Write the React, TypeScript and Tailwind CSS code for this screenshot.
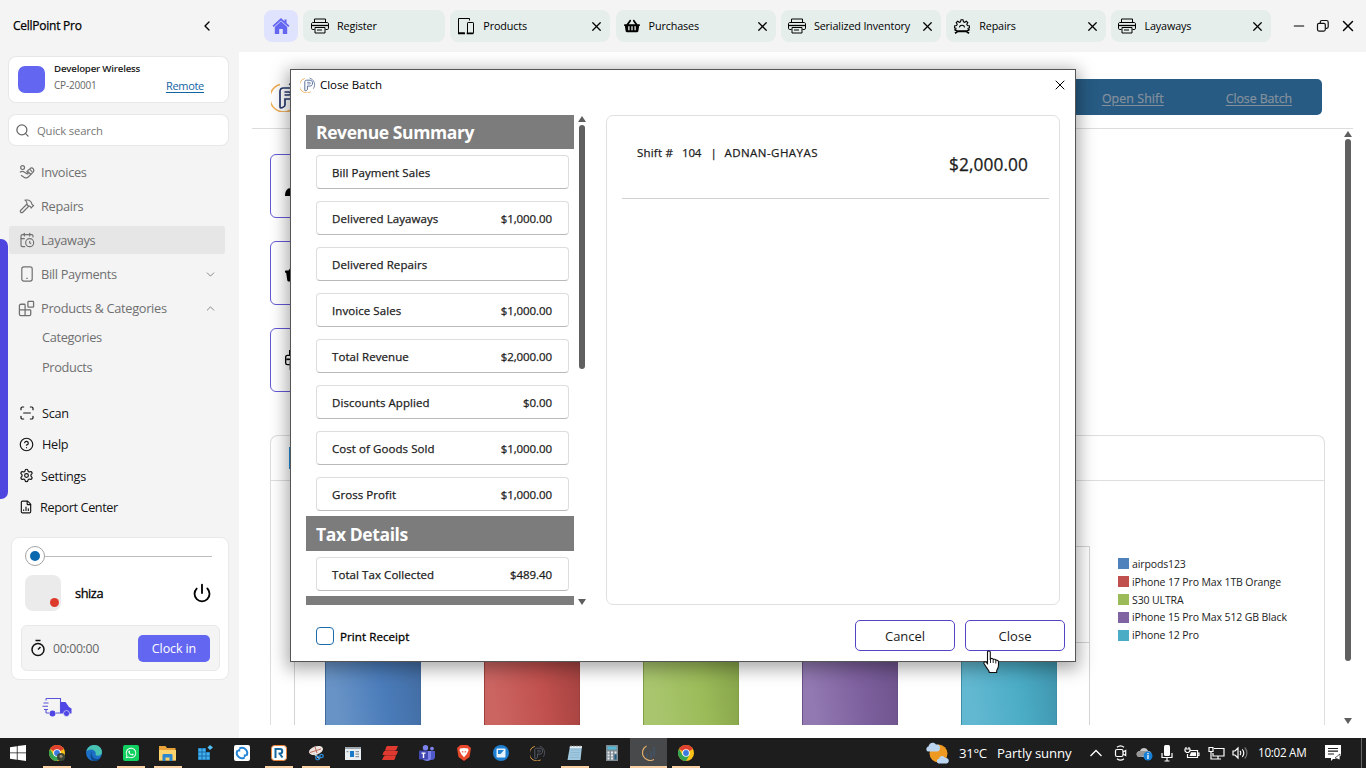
import React from "react";
import {
  CalendarClock,
  Blocks,
  ScanLine,
  Settings,
  FileChartColumn,
  HelpCircle,
  Hammer,
  Power,
  Search,
  ChevronLeft,
  ChevronDown,
  ChevronUp,
  X,
  Minus,
} from "lucide-react";
import { FaShoppingBasket, FaWhatsapp } from "react-icons/fa";

function Printer({ className = "" }: { className?: string }) {
  return (
    <svg viewBox="0 0 18 16" fill="none" stroke="currentColor" strokeWidth="1" className={className}>
      <path d="M3.5 4.500V1h11v3.500M3.500 11.500H1.800c-.8 0-1.300-.4-1.300-1.200V6c0-.9.500-1.500 1.300-1.500h14.400c.8 0 1.300.6 1.300 1.500v4.300c0 .8-.5 1.200-1.300 1.200h-1.700" />
      <path d="M1 7.500h16" strokeWidth="1.300" />
      <path d="M4 9.500h10V15H4zM6 12h5" />
    </svg>
  );
}

function Devices() {
  return (
    <svg viewBox="0 0 18 18" fill="none" stroke="currentColor" strokeWidth="1" className="h-[18px] w-[18px]">
      <path d="M12.500 3.500V1.500h-11v14.500h6" />
      <path d="M1 16.300h7M9.700 16.300h6.600" strokeWidth="1.800" />
      <rect x="10.500" y="5.500" width="6" height="11" rx="0.600" />
    </svg>
  );
}

function GearTools() {
  return (
    <svg viewBox="0 0 18 16" fill="none" stroke="currentColor" strokeWidth="1.100" className="h-4 w-[18px]">
      <path d="M3.500 10.500 1.500 9.800l.2-2 1.900-.3.600-1.300L3.200 4.600l1.500-1.300 1.600 1 1.200-.5.500-2h2l.5 2 1.200.500 1.600-1 1.500 1.300-1 1.600.6 1.300 1.900.300.2 2-2 .7" />
      <path d="M6.300 9.300a2.800 2.800 0 0 1 5.400 0" />
      <path d="M1.500 11.300 4 13.200h10l2.500-1.900M2 15.300l2.500-1.800h9l2.500 1.800" strokeWidth="1.700" />
    </svg>
  );
}

function InvoiceIcon() {
  return (
    <svg viewBox="0 0 16 16" fill="none" stroke="currentColor" strokeWidth="1.200" strokeLinecap="round" strokeLinejoin="round" className="h-4 w-4">
      <circle cx="3.600" cy="3.600" r="1.900" />
      <path d="M1.300 8c1.600-1 3.200-.6 4.700.6l1.800 1.200c.7.500 1.700-.3 1.100-1.100L7.800 7.600l3.200-3c1-1 2.400-.9 3.100 0 1 1.300.8 2.700-.2 3.800L9.300 13c-1.300 1.300-3 1-4.300.2L2.400 11.600" />
      <path d="M9 7.800 11.500 10M11 5.600l2 2" />
    </svg>
  );
}

function PhoneIcon() {
  return (
    <svg viewBox="0 0 12 16" fill="none" stroke="currentColor" strokeWidth="1.200" className="h-4 w-3">
      <rect x="0.800" y="0.900" width="10.400" height="14.200" rx="2" />
      <path d="M5.300 12.300h1.400" />
    </svg>
  );
}

function HomeIcon() {
  return (
    <svg viewBox="0 0 18 16" className="h-4 w-[18px]">
      <path d="M9 0 .5 7.800l1.200 1.300L9 2.500l7.300 6.600 1.200-1.300L14.500 5V1.500h-2V3.200z" fill="#6366f1" />
      <path d="M9 3.300 2.800 8.900V16h4.400v-5h3.600v5h4.400V8.900z" fill="#6366f1" />
    </svg>
  );
}

function Logo({ className = "", stroke = "#25396f" }: { className?: string; stroke?: string }) {
  return (
    <svg viewBox="0 0 30 30" fill="none" className={className}>
      <path d="M9 2.500A14 14 0 1 0 20 28" stroke="#efad50" strokeWidth="1.600" />
      <path d="M18 2a13 13 0 0 1 7 20" stroke={stroke} strokeWidth="1.400" />
      <path d="M9 25V9.500C9 7 10 6 12.500 6H19c6 0 6 11 0 11h-5v6c0 2-5 4-5 2Z" stroke={stroke} strokeWidth="1.700" />
      <path d="M13.500 10H18c2 0 2 3 0 3h-4.500" stroke={stroke} strokeWidth="1.400" />
    </svg>
  );
}

const navItems = [
  { label: "Invoices", icon: <InvoiceIcon /> },
  { label: "Repairs", icon: <Hammer size={16} strokeWidth={1.700} /> },
  { label: "Layaways", icon: <CalendarClock size={16} strokeWidth={1.700} />, active: true },
  { label: "Bill Payments", icon: <PhoneIcon />, chevron: "down" },
  { label: "Products & Categories", icon: <Blocks size={17} strokeWidth={1.800} />, chevron: "up" },
];

function Sidebar() {
  return (
    <aside className="relative flex h-[738px] w-[239px] shrink-0 flex-col bg-[#f4f4f5]">
      <div className="absolute top-[239px] left-0 h-[260px] w-2 rounded-r-[7px] bg-[#4f46e0]" />
      <div className="flex h-[52px] items-center justify-between pr-6 pl-[13px]">
        <span className="text-[12px] tracking-[-0.250px] text-black [-webkit-text-stroke:0.250px]">CellPoint Pro</span>
        <ChevronLeft size={16} strokeWidth={2} className="text-black" />
      </div>
      <div className="mt-[5px] ml-[9px] flex h-[45px] w-[219px] items-center rounded-[7px] bg-white pl-[9px] ring-1 ring-[#e8e8ea]">
        <div className="size-[27px] rounded-[7px] bg-[#6366f1]" />
        <div className="ml-[9px] flex h-full w-[150px] flex-col pt-1">
          <span className="text-[9.700px] leading-4 font-semibold tracking-[-0.200px] text-[#222]">Developer Wireless</span>
          <div className="flex items-center justify-between">
            <span className="text-[10px] leading-[17px] tracking-[-0.200px] text-[#666]">CP-20001</span>
            <span className="text-[11px] leading-[17px] tracking-[-0.300px] text-[#1264a3] underline underline-offset-2">Remote</span>
          </div>
        </div>
      </div>
      <div className="mt-[13px] ml-[9px] flex h-[30px] w-[219px] items-center rounded-[7px] bg-white pl-[6px] ring-1 ring-[#e8e8ea]">
        <Search size={15} strokeWidth={2} className="text-[#666]" />
        <span className="ml-[7px] pt-0.5 text-[11.300px] tracking-[-0.170px] text-[#777]">Quick search</span>
      </div>
      <nav className="mt-[13px] flex flex-col gap-1.5 pl-[9px] text-[#707070]">
        {navItems.map((n) => (
          <div
            key={n.label}
            className={
              n.active
                ? "flex h-7 w-[216px] items-center rounded-[3px] bg-[#e6e6e6] pl-[9px]"
                : "flex h-7 w-[216px] items-center pl-[9px]"
            }
          >
            <span className="flex w-[17px] justify-center">{n.icon}</span>
            <span className="ml-1.5 flex-1 pt-0.5 text-[12.800px] tracking-[-0.320px] whitespace-nowrap">{n.label}</span>
            {n.chevron === "down" && <ChevronDown size={13} strokeWidth={1.500} className="mr-2" />}
            {n.chevron === "up" && <ChevronUp size={13} strokeWidth={1.500} className="mr-2" />}
          </div>
        ))}
      </nav>
      <div className="flex flex-col pl-[42px] text-[12.800px] tracking-[-0.350px] text-[#707070]">
        <span className="h-[30px] leading-[30px]">Categories</span>
        <span className="h-[30px] leading-[30px]">Products</span>
      </div>
      <div className="mt-[15px] flex flex-col pl-[19px] text-[12.700px] tracking-[-0.450px] text-[#151515]">
        <div className="flex h-[31.500px] items-center gap-[7px]">
          <ScanLine size={16} strokeWidth={1.800} />
          <span className="pt-px tracking-[-0.300px]">Scan</span>
        </div>
        <div className="flex h-[31.500px] items-center gap-2">
          <HelpCircle size={15} strokeWidth={1.900} />
          <span className="pt-px tracking-[-0.300px]">Help</span>
        </div>
        <div className="flex h-[31.500px] items-center gap-[7px]">
          <Settings size={15} strokeWidth={1.900} />
          <span className="pt-px tracking-[-0.250px]">Settings</span>
        </div>
        <div className="flex h-[31.500px] items-center gap-[7px]">
          <FileChartColumn size={14} strokeWidth={2} />
          <span className="tracking-[-0.400px]">Report Center</span>
        </div>
      </div>
      <div className="mt-[14px] ml-[11px] flex h-[143px] w-[218px] flex-col rounded-lg border border-[#e9e9eb] bg-white pl-[9px]">
        <div className="mt-2 ml-1 flex items-center">
          <div className="flex size-[20px] items-center justify-center rounded-full border border-[#a3a3a3]">
            <div className="size-[10px] rounded-full bg-[#0a68ae]" />
          </div>
          <div className="h-px w-[167px] bg-[#bdbdbd]" />
        </div>
        <div className="mt-[9px] ml-1 flex h-9 items-center">
          <div className="flex size-9 items-end justify-end rounded-lg bg-[#ebebeb] pr-[2px] pb-1">
            <div className="size-[9px] rounded-full bg-[#dd3a2c]" />
          </div>
          <span className="ml-[14px] flex-1 pt-0.5 text-[12.800px] tracking-[-0.450px] text-black [-webkit-text-stroke:0.300px]">shiza</span>
          <Power size={20} strokeWidth={2.200} className="mr-[16px] text-black" />
        </div>
        <div className="mt-[14px] flex h-[46px] w-[199px] items-center rounded-md border border-[#e8e8e8] bg-[#f4f4f5] pl-2">
          <svg viewBox="0 0 16 18" fill="none" stroke="#111" strokeWidth="1.500" className="h-[18px] w-4">
            <circle cx="8" cy="10.500" r="6" />
            <path d="M5.500 1.500h5M8 10.500l2.500-2.500" />
          </svg>
          <span className="ml-[7px] w-[85px] pt-0.5 text-[12.300px] tracking-[-0.350px] text-[#666]">00:00:00</span>
          <div className="flex h-[27px] w-[72px] items-center justify-center rounded-[5px] bg-[#6366f1] pt-0.5 text-[12.500px] tracking-[-0.100px] text-white">
            Clock in
          </div>
        </div>
      </div>
      <svg viewBox="0 0 30 20" fill="none" className="mt-[17px] ml-[42px] h-5 w-[30px]">
        <path d="M4 1.500h14.500V16H14M4 16h3M4 1.500v2M4 13v3" stroke="#5a54d8" strokeWidth="1.100" />
        <path d="M1.500 6h5M.5 9.300h5.500M2 12.500h4" stroke="#5a54d8" strokeWidth="1.100" />
        <path d="M18.500 5h5l3.500 5 2.500 1.500v5H18.500z" fill="#4f46e5" />
        <circle cx="10.500" cy="16.500" r="3" fill="#4f46e5" />
        <circle cx="24.500" cy="16.500" r="3" fill="#4f46e5" stroke="#f4f4f5" strokeWidth="0.600" />
      </svg>
    </aside>
  );
}

const tabs = [
  { label: "Register", icon: <Printer className="h-4 w-[18px]" />, closable: false },
  { label: "Products", icon: <Devices />, closable: true },
  { label: "Purchases", icon: <FaShoppingBasket size={16} />, closable: true },
  { label: "Serialized Inventory", icon: <Printer className="h-4 w-[18px]" />, closable: true },
  { label: "Repairs", icon: <GearTools />, closable: true },
  { label: "Layaways", icon: <Printer className="h-4 w-[18px]" />, closable: true },
];

function TabBar() {
  return (
    <header className="flex h-[52px] items-center bg-[#f4f4f4] pl-[25px] text-black">
      <div className="flex h-8 w-[34px] items-center justify-center rounded-lg bg-[#e0e3fd]">
        <HomeIcon />
      </div>
      <div className="ml-[5px] flex gap-[5.300px]">
        {tabs.map((t) => (
          <div
            key={t.label}
            className={
              t.closable
                ? "flex h-8 w-[160px] items-center rounded-lg bg-[#e6eeec] pr-1.5 pl-[7px]"
                : "flex h-8 w-[142px] items-center rounded-lg bg-[#e6eeec] pr-1.5 pl-[8px]"
            }
          >
            <span className="flex w-[18px] justify-center">{t.icon}</span>
            <span className="ml-2 flex-1 pt-px text-[10.800px] tracking-[-0.140px] whitespace-nowrap">{t.label}</span>
            {t.closable && <X size={15} strokeWidth={2} />}
          </div>
        ))}
      </div>
      <div className="ml-[20px] flex items-center gap-[9px]">
        <Minus size={16} strokeWidth={1.800} />
        <svg viewBox="0 0 14 14" fill="none" stroke="#111" strokeWidth="1.200" className="size-[14px]">
          <rect x="1.500" y="4.300" width="7.800" height="7.800" rx="1.500" />
          <path d="M4.300 4V3c0-.9.600-1.500 1.500-1.500h4.700c1 0 1.700.7 1.700 1.700v4.600c0 .9-.6 1.500-1.500 1.500H9.500" />
        </svg>
        <X size={18} strokeWidth={1.900} />
      </div>
    </header>
  );
}

const legend = [
  { name: "airpods123", swatch: "bg-[#4f81bd]" },
  { name: "iPhone 17 Pro Max 1TB Orange", swatch: "bg-[#c0504d]" },
  { name: "S30 ULTRA", swatch: "bg-[#9bbb59]" },
  { name: "iPhone 15 Pro Max 512 GB Black", swatch: "bg-[#8064a2]" },
  { name: "iPhone 12 Pro", swatch: "bg-[#4bacc6]" },
];

const bars = [
  { x: 31, from: "#6893c6", mid: "#4a7cba", to: "#426a9e" },
  { x: 190, from: "#cb6562", mid: "#c0504d", to: "#9f403e" },
  { x: 349, from: "#a9c66e", mid: "#9bbb59", to: "#829f47" },
  { x: 508, from: "#9279b1", mid: "#7d609e", to: "#6a5188" },
  { x: 667, from: "#62b8d0", mid: "#4bacc6", to: "#3d90a7" },
];

function Tile({ children }: { children: React.ReactNode }) {
  return (
    <div className="flex h-16 w-[240px] items-center rounded-md border border-[#6259d6] bg-white pl-[14px] text-black">
      {children}
    </div>
  );
}

function Dashboard() {
  return (
    <div className="flex h-[686px] w-full overflow-hidden bg-white">
      <div className="flex w-[1101px] flex-col">
        <div className="-mr-[13px] ml-[13px] flex h-[77px] items-start justify-between border-b border-[#dcdcdc] pl-[31px]">
          <Logo className="mt-[30px] -ml-[12px] size-[30px]" />
          <div className="mt-[27px] mr-[31px] flex h-9 w-[500px] items-center justify-end rounded-[5px] bg-[#275b83] pt-1 pr-[30px] text-[12.400px] text-[#84909c] [-webkit-text-stroke:0.250px]">
            <span className="tracking-[0.080px] underline underline-offset-2">Open Shift</span>
            <span className="ml-[62px] tracking-[-0.100px] underline underline-offset-2">Close Batch</span>
          </div>
        </div>
        <div className="mt-[25px] ml-[31px] flex flex-col gap-[23px]">
          <Tile>
            <svg viewBox="0 0 24 24" className="size-6">
              <circle cx="12" cy="7" r="5" />
              <path d="M0 22c0-5 2-8 6-8h12c4 0 6 3 6 8z" />
            </svg>
          </Tile>
          <Tile>
            <FaShoppingBasket size={22} />
          </Tile>
          <Tile>
            <Printer className="h-[22px] w-6" />
          </Tile>
        </div>
        <div className="mt-[43px] ml-[31px] flex h-[290px] w-[1055px] flex-col rounded-t-lg border border-b-0 border-[#dedede]">
          <div className="flex h-[45px] shrink-0 items-center border-b border-[#dedede] pl-[18px]">
            <div className="h-[22px] w-10 bg-[#1f8ee0]" />
          </div>
          <div className="flex">
            <svg width="796" height="244" viewBox="0 0 796 244" className="ml-[23px] shrink-0">
              <defs>
                {bars.map((b) => (
                  <linearGradient key={b.x} id={`bar${b.x}`} x1="0" y1="0.200" x2="1" y2="0">
                    <stop offset="0" stopColor={b.from} />
                    <stop offset="0.500" stopColor={b.mid} />
                    <stop offset="1" stopColor={b.to} />
                  </linearGradient>
                ))}
              </defs>
              <path d="M.5 244V65.500h795V244M.5 161.500h795" fill="none" stroke="#d4d4d4" />
              {bars.map((b) => (
                <rect key={b.x} x={b.x + 0.500} y="130" width="95" height="120" fill={`url(#bar${b.x})`} stroke={b.to} />
              ))}
            </svg>
            <div className="mt-[74px] ml-[28px] flex flex-col">
              {legend.map((l) => (
                <div key={l.name} className="flex h-[17.800px] items-center">
                  <div className={`size-[11px] ${l.swatch}`} />
                  <span className="ml-[3px] pt-0.5 text-[10.500px] tracking-[-0.120px] whitespace-nowrap text-[#222]">{l.name}</span>
                </div>
              ))}
            </div>
          </div>
        </div>
        <div className="h-[13px] shrink-0 bg-white" />
      </div>
      <div className="flex w-[15px] flex-col items-center pt-[79px] pb-[14px]">
        <svg viewBox="0 0 8 6" className="h-[6px] w-2 shrink-0 fill-[#5e5e5e]">
          <path d="M4 0 8 6H0z" />
        </svg>
        <div className="mt-[2px] h-[522px] w-[6px] rounded-full bg-[#606060]" />
        <div className="flex-1" />
        <svg viewBox="0 0 8 6" className="h-[6px] w-2 shrink-0 fill-[#5e5e5e]">
          <path d="M0 0h8L4 6z" />
        </svg>
      </div>
    </div>
  );
}

function Section({ title, tall = false }: { title: string; tall?: boolean }) {
  return (
    <div
      className={
        tall
          ? "h-[35px] w-[268px] shrink-0 bg-[#7c7c7c] pl-[10px] text-[17.500px] leading-[37px] font-bold tracking-[-0.400px] text-white"
          : "h-[34px] w-[268px] shrink-0 bg-[#7c7c7c] pl-[10px] text-[17.500px] leading-[35px] font-bold tracking-[-0.400px] text-white"
      }
    >
      {title}
    </div>
  );
}

function Row({ label, value }: { label: string; value?: string }) {
  return (
    <div className="ml-[10px] flex h-[34px] w-[253px] shrink-0 items-center justify-between rounded-[4px] border border-[#dddddd] border-b-[#b9b9b9] pt-px pr-4 pl-[15px] text-[11.500px] text-[#1c1c1c] [-webkit-text-stroke:0.250px]">
      <span className="tracking-[0.070px]">{label}</span>
      <span className="tracking-[-0.080px]">{value}</span>
    </div>
  );
}

const revenue = [
  { label: "Bill Payment Sales", value: "" },
  { label: "Delivered Layaways", value: "$1,000.00" },
  { label: "Delivered Repairs", value: "" },
  { label: "Invoice Sales", value: "$1,000.00" },
  { label: "Total Revenue", value: "$2,000.00" },
  { label: "Discounts Applied", value: "$0.00" },
  { label: "Cost of Goods Sold", value: "$1,000.00" },
  { label: "Gross Profit", value: "$1,000.00" },
];

function CloseBatchDialog() {
  return (
    <div className="absolute top-[69px] left-[290px] flex h-[593px] w-[786px] flex-col border border-[#555] bg-white shadow-[0_4px_16px_3px_rgba(0,0,0,0.34)]">
      <div className="flex h-[29px] items-center pr-[7px] pl-[9px]">
        <Logo className="size-4" stroke="#4c658f" />
        <span className="ml-1 flex-1 text-[11.500px] tracking-[-0.050px] text-black">Close Batch</span>
        <X size={16} strokeWidth={1.500} className="text-black" />
      </div>
      <div className="mt-4 flex h-[490px] pl-[15px]">
        <div className="flex w-[268px] flex-col overflow-hidden">
          <Section title="Revenue Summary" />
          <div className="mt-1.5 mb-[5px] flex flex-col gap-3">
            {revenue.map((r) => (
              <Row key={r.label} label={r.label} value={r.value} />
            ))}
          </div>
          <Section title="Tax Details" tall />
          <div className="mt-1.5 mb-[5px]">
            <Row label="Total Tax Collected" value="$489.40" />
          </div>
          <Section title="" />
        </div>
        <div className="ml-1 flex w-2 flex-col items-center">
          <svg viewBox="0 0 8 6" className="mt-px h-[6px] w-2 shrink-0 fill-[#5e5e5e]">
            <path d="M4 0 8 6H0z" />
          </svg>
          <div className="mt-[3px] h-[244px] w-[6px] rounded-full bg-[#606060]" />
          <div className="flex-1" />
          <svg viewBox="0 0 8 6" className="h-[6px] w-2 shrink-0 fill-[#5e5e5e]">
            <path d="M0 0h8L4 6z" />
          </svg>
        </div>
        <div className="ml-5 h-full w-[454px] rounded-[7px] border border-[#e0e0e0] pr-[10px] pl-[15px]">
          <div className="flex h-[83px] items-start justify-between border-b border-[#d0d0d0] pr-[21px] pl-[15px] text-[#1c1c1c] [-webkit-text-stroke:0.250px]">
            <div className="mt-[29px] flex text-[11.500px] leading-4">
              <span className="w-[45px] tracking-[0.200px]">Shift #</span>
              <span className="w-[28.500px] tracking-[-0.200px]">104</span>
              <span className="w-[14px]">|</span>
              <span className="tracking-[0.450px]">ADNAN-GHAYAS</span>
            </div>
            <span className="mt-[37px] text-[17.300px] leading-6 tracking-[0.080px]">$2,000.00</span>
          </div>
        </div>
      </div>
      <div className="flex flex-1 items-center pt-[5px] pr-[10px] pl-[25px]">
        <div className="size-[18px] rounded-[4px] border-[1.500px] border-[#1d6baa]" />
        <span className="ml-1.5 flex-1 pt-0.5 text-[11.600px] tracking-[0.050px] text-black [-webkit-text-stroke:0.300px]">Print Receipt</span>
        <button className="h-[31px] w-[100px] rounded-[5px] border border-[#5145c4] pt-0.5 text-[13px] tracking-[-0.050px] text-[#1c1c1c]">
          Cancel
        </button>
        <button className="ml-[10px] h-[31px] w-[100px] rounded-[5px] border border-[#5145c4] pt-0.5 text-[13px] tracking-[0.050px] text-[#1c1c1c]">
          Close
        </button>
      </div>
    </div>
  );
}

function Chrome({ profile = false }: { profile?: boolean }) {
  return (
    <svg viewBox="0 0 16 16" className="size-4">
      <circle cx="8" cy="8" r="8" fill="#fbc116" />
      <path d="M8 8 1.070 4A8 8 0 0 1 14.930 4z" fill="#df4130" />
      <path d="M1.070 4A8 8 0 0 0 8 16l3.500-6L8 8 4.500 10z" fill="#35a352" />
      <circle cx="8" cy="8" r="3.800" fill="#fff" />
      <circle cx="8" cy="8" r="2.900" fill="#3a79e0" />
      {profile && <circle cx="12" cy="12" r="4" fill="#3c4636" />}
      {profile && <circle cx="12" cy="11.300" r="1.500" fill="#a48b70" />}
    </svg>
  );
}

const apps = [
  { key: "browser", open: true, icon: <Chrome profile /> },
  {
    key: "edge",
    icon: (
      <svg viewBox="0 0 16 16" className="size-4">
        <circle cx="8" cy="8" r="8" fill="#1c6fc4" />
        <path d="M.3 6.500C1.500 2 5 0 8.500 0 13 0 16 3.500 16 7c0 2.500-2 3.800-4 3.800-1.800 0-2.800-.8-2.400-1.500C10.500 7 8 4.500 5 4.500 3 4.500 1 5.500.3 6.500z" fill="#49c3b1" />
        <path d="M6.500 6.500c-2 3 0 6.800 3.500 7.500 2 .3 4-.5 5-1.500-1.500 2.500-4 3.500-7 3.500-3.500-1-5-6-1.500-9.500z" fill="#0d4a93" />
      </svg>
    ),
  },
  {
    key: "chat",
    open: true,
    icon: (
      <div className="flex size-4 items-center justify-center rounded-[2px] bg-[#10d160]">
        <FaWhatsapp size={12} className="text-white" />
      </div>
    ),
  },
  {
    key: "files",
    open: true,
    icon: (
      <svg viewBox="0 0 17 15" className="h-[15px] w-[17px]">
        <path d="M0 0h6.500l1.500 2h8.500v12.500H0z" fill="#e9a13a" />
        <path d="M0 4h17v10.500H0z" fill="#fbd46d" />
        <path d="M3.500 15V9.500c0-1 .5-1.500 1.500-1.500h7c1 0 1.500.5 1.500 1.500V15h-3v-3.500h-4V15z" fill="#2c86d0" />
      </svg>
    ),
  },
  {
    key: "registry",
    icon: (
      <svg viewBox="0 0 16 16" className="size-4">
        <path d="M1 3h12v12H1z" fill="#1668a8" />
        <path d="M1.500 3.500h3v3h-3zM5.500 3.500h3v3h-3zM1.500 7.500h3v3h-3zM5.500 7.500h3v3h-3zM9.500 7.500h3v3h-3zM1.500 11.500h3v3h-3zM5.500 11.500h3v3h-3zM9.500 11.500h3v3h-3z" fill="#44b1ec" />
        <path d="M9 3h4v4H9z" fill="#1f1f1f" />
        <path d="m13 0 3 2.500-3 2.500-2.500-2.500z" fill="#54c0f5" />
      </svg>
    ),
  },
  {
    key: "sync",
    icon: (
      <svg viewBox="0 0 16 16" fill="none" className="size-4">
        <rect width="16" height="16" rx="2" fill="#fff" />
        <path d="M10.500 12.600A5.200 5.200 0 0 1 3.500 5.500M5.500 3.400a5.200 5.200 0 0 1 7 7.100" stroke="#2484d6" strokeWidth="2" />
        <path d="M2 6.500 6 3l.3 3.500zM14 9.500 10 13l-.3-3.500z" fill="#2484d6" />
      </svg>
    ),
  },
  {
    key: "r",
    open: true,
    icon: (
      <svg viewBox="0 0 16 16" fill="none" className="size-4">
        <rect x="0.500" y="0.500" width="15" height="15" rx="3" fill="#fff" stroke="#e8833b" />
        <path d="M4.500 13V4h4.500c3 0 3 4.500 0 4.500H7.500M8.500 8.500l3 4" stroke="#16679f" strokeWidth="2" />
      </svg>
    ),
  },
  {
    key: "snip",
    open: true,
    icon: (
      <svg viewBox="0 0 16 16" fill="none" className="size-4">
        <ellipse cx="8" cy="5.500" rx="7.200" ry="4.200" transform="rotate(-18 8 5.500)" fill="#eee5e1" />
        <path d="M2 7.500 13 4M7 2l2 6" stroke="#bd6b5d" />
        <path d="m5 8 7 6" stroke="#d9d9d9" strokeWidth="1.500" />
        <circle cx="9.500" cy="13" r="1.800" stroke="#2c8bd6" strokeWidth="1.300" />
        <circle cx="13.500" cy="11" r="1.700" stroke="#2c8bd6" strokeWidth="1.300" />
      </svg>
    ),
  },
  {
    key: "news",
    icon: (
      <svg viewBox="0 0 16 13" className="h-[13px] w-4">
        <path d="M0 0h16v13H0z" fill="#e9eef2" />
        <path d="M0 0h16v2H0z" fill="#9da6ad" />
        <path d="M5 4h4v6H5z" fill="#1778c8" />
        <path d="M10.500 4H14v1.200h-3.500zM10.500 6.500H14v1.200h-3.500zM10.500 9H14v1.200h-3.500zM1.500 4h2v1.200h-2z" fill="#8a949c" />
      </svg>
    ),
  },
  {
    key: "red",
    icon: (
      <svg viewBox="0 0 16 14" fill="#e0392f" className="h-[14px] w-4">
        <path d="M5.500 0H16l-1.500 3.500c-.3.700-1 1.200-1.500 1.200H3L4 1.500C4.300.5 5 0 5.500 0zM2.500 4.900H16l-1 3c-.3.700-1 1-1.500 1H.5L1.500 6zM3.500 9.200H14l-1 3.300c-.3 1-1 1.500-1.500 1.500H0l1.500-3c.4-1 1-1.800 2-1.800z" />
      </svg>
    ),
  },
  {
    key: "teams",
    icon: (
      <svg viewBox="0 0 16 16" className="size-4">
        <circle cx="6.500" cy="2.700" r="2.700" fill="#7b83eb" />
        <circle cx="13" cy="3.600" r="1.900" fill="#7b83eb" />
        <path d="M9 6h7v6c0 2-2 3.500-4 3-2-.5-3-2-3-4z" fill="#5059c9" />
        <path d="M3 6h9v7c0 4-7 4-9 0z" fill="#7b83eb" />
        <rect y="5.500" width="9" height="9" rx="1" fill="#4349b3" />
        <path d="M2.500 7.500h4v1.300H5.200V13H3.800V8.800H2.500z" fill="#fff" />
      </svg>
    ),
  },
  {
    key: "shield",
    icon: (
      <svg viewBox="0 0 14 16" className="h-4 w-[14px]">
        <path d="M3.500 0h7L14 3l-1.500 9L7 16 1.500 12 0 3z" fill="#e9482c" />
        <path d="M3 3.500 7 3l4 .5.500 2-2 4L8 11l-1 1.500L6 11 4.500 9.500l-2-4z" fill="#fff" />
        <path d="m4.500 6 2 .5L6 8zM9.500 6l-2 .5L8 8z" fill="#e9482c" />
      </svg>
    ),
  },
  {
    key: "blue",
    icon: (
      <svg viewBox="0 0 16 16" className="size-4">
        <circle cx="8" cy="8" r="8" fill="#1f7fd0" />
        <rect x="3.500" y="3.500" width="9" height="9" rx="1" fill="#e7f3fc" />
        <path d="M5 5h6L7.500 9H5z" fill="#1f7fd0" />
      </svg>
    ),
  },
  { key: "point", icon: <Logo className="size-4" stroke="#5b6270" /> },
  {
    key: "notes",
    open: true,
    icon: (
      <svg viewBox="0 0 16 16" className="size-4">
        <path d="M3 1h12l-1.500 14H.5z" fill="#9fc8df" />
        <path d="M3 1h12l-.3 2H2.700z" fill="#e6eef2" />
        <path d="M4 5h9M3.700 7.500h9M3.400 10h9M3 12.500h9" stroke="#86b2cb" strokeWidth="0.700" />
        <path d="M4 0v2M7 0v2M10 0v2M13 0v2" stroke="#777" strokeWidth="0.800" />
      </svg>
    ),
  },
  {
    key: "calc",
    icon: (
      <svg viewBox="0 0 12 16" className="h-4 w-3">
        <path d="M0 0h12v16H0z" fill="#7f8b92" />
        <path d="M1.500 1.500h9v3h-9z" fill="#55b9d6" />
        <path d="M1.500 6.500h2v2h-2zM5 6.500h2v2H5zM8.500 6.500h2v2h-2zM1.500 9.500h2v2h-2zM5 9.500h2v2H5zM1.500 12.500h2v2h-2zM5 12.500h2v2H5z" fill="#e7ebed" />
        <path d="M8.500 9.500h2v5h-2z" fill="#215d85" />
      </svg>
    ),
  },
  {
    key: "active",
    open: true,
    active: true,
    icon: (
      <svg viewBox="0 0 16 16" fill="none" className="size-4">
        <path d="M5.500 1A7.300 7.300 0 1 0 13 14.500" stroke="#e0ad6c" strokeWidth="1.200" />
        <path d="M13 2v9M10 6v7M6 8.500v4" stroke="#3d5878" />
      </svg>
    ),
  },
  { key: "chrome", open: true, icon: <Chrome /> },
];

function Taskbar() {
  return (
    <footer className="flex h-[30px] w-full items-center bg-[#1d1d1d] text-white">
      <div className="flex w-[38px] items-center justify-center">
        <svg viewBox="0 0 16 16" fill="#fff" className="ml-[-2px] size-4">
          <path d="M0 2.200 6.800 1.200v6.300H0zM7.600 1.100 16 0v7.500H7.600zM0 8.300h6.800v6.400L0 13.700zM7.600 8.300H16V16l-8.400-1.200z" />
        </svg>
      </div>
      {apps.map((a) => (
        <div
          key={a.key}
          className={
            a.active
              ? "flex h-full w-[37px] flex-col items-center bg-[#48494b]"
              : "flex h-full w-[37px] flex-col items-center"
          }
        >
          <div className="flex h-7 items-center justify-center pt-0.5">{a.icon}</div>
          {a.open && <div className={a.active ? "h-0.5 w-full bg-[#f9cfa4]" : "h-0.5 w-7 bg-[#f9cfa4]"} />}
        </div>
      ))}
      <div className="ml-[222px] flex items-center">
        <svg viewBox="0 0 24 24" className="size-6 shrink-0">
          <circle cx="12.500" cy="12.500" r="9" fill="#ee9a22" />
          <path d="M2 10.500C-.5 9.500 0 6 2.500 5.500 3 1.500 8 .5 10 3.500c3-.5 4 1 4 3 0 2.500-1 4-3 4z" fill="#bcd6f2" />
          <path d="M12.500 22.500c-2.500-1-2-4.500.5-4.800.5-3 4.500-3.500 5.800-1 2.500-.2 4 1.300 4 3 0 1.800-1.300 2.800-2.800 2.800z" fill="#bcd6f2" />
        </svg>
        <span className="ml-[9px] w-[38px] pt-px text-[13.200px] tracking-[-0.300px] whitespace-nowrap">31°C</span>
        <span className="w-[92px] pt-px text-[13.200px] tracking-[-0.110px] whitespace-nowrap">Partly sunny</span>
        <svg viewBox="0 0 14 8" fill="none" stroke="#fff" strokeWidth="1.300" className="h-2 w-[14px] shrink-0">
          <path d="m1.500 7 5.500-5.500L12.500 7" />
        </svg>
        <svg viewBox="0 0 14 16" fill="none" stroke="#fff" strokeWidth="1.200" className="ml-[11px] h-4 w-[14px] shrink-0">
          <rect x="1.500" y="4.500" width="7.500" height="7" rx="1.500" />
          <path d="m9 7 2.700-1.500v5L9 9M3 2.200C5 .6 8 .6 10 2.200M3 13.800c2 1.600 5 1.600 7 0" />
        </svg>
        <svg viewBox="0 0 17 16" className="ml-[8px] h-4 w-[17px] shrink-0">
          <path d="M2.500 12C-1 10 .5 6 4 6c1-4 7-4 8 0 3 0 4 2 3 5l-2 1z" fill="#c9c9c9" />
          <path d="m4 6 8 0-6 6H2C0 10 0 7 4 6z" fill="#969696" />
          <circle cx="12" cy="11" r="4.500" fill="#1580d8" />
          <path d="M12 8v1.200M12 10v4" stroke="#fff" strokeWidth="1.300" />
        </svg>
        <svg viewBox="0 0 12 17" className="ml-[8px] h-[17px] w-3 shrink-0">
          <rect x="3" y="0" width="6" height="11" rx="1.500" fill="#fff" />
          <path d="M1 8v4.500h10V8M6 12.500V16M3.500 16h5" stroke="#fff" strokeWidth="1.200" fill="none" />
        </svg>
        <svg viewBox="0 0 16 14" fill="none" stroke="#fff" strokeWidth="1.200" className="ml-[11px] h-[14px] w-4 shrink-0">
          <path d="M6 4.500h7.500v7H3.500V8M13.500 7H15v2.500h-1.500M2 1v2M5 1v2M1 3h5v2L4.500 6.500h-2L1 5z" />
          <path d="M7 6.200h5V10H5.500z" fill="#fff" stroke="none" />
        </svg>
        <svg viewBox="0 0 17 15" fill="none" stroke="#fff" strokeWidth="1.200" className="ml-2 h-[15px] w-[17px] shrink-0">
          <path d="M6 2.500h10v7.500H5V7M1 1.500h4v4H1zM3 5.500V13h10M10 10v3" />
        </svg>
        <svg viewBox="0 0 16 14" fill="none" stroke="#fff" strokeWidth="1.200" className="ml-[7px] h-[14px] w-4 shrink-0">
          <path d="M1 5v4h2l3 3V2L3 5zM8 5c1 1 1 3 0 4M10.300 3.300c2 2 2 5.500 0 7.500" />
          <path d="M12.700 1.500c3 3 3 8 0 11" stroke="#777" />
        </svg>
        <span className="ml-[10px] w-[67px] text-[11.700px] tracking-[-0.300px] whitespace-nowrap">10:02 AM</span>
        <svg viewBox="0 0 17 16" className="h-4 w-[17px] shrink-0">
          <path d="M0 0h16v11l-3 1v2h-5l-2 2v-3H0z" fill="#fff" />
          <path d="M3 3.500h10M3 6.200h10M3 9h6" stroke="#1d1d1d" strokeWidth="1.200" />
          <path d="m10 13 5-4v6z" fill="#fff" stroke="#1d1d1d" strokeWidth="0.700" />
        </svg>
        <div className="ml-[19px] h-[30px] w-px bg-[#666]" />
      </div>
    </footer>
  );
}

export default function App() {
  return (
    <div className="relative flex h-[768px] w-[1366px] flex-col overflow-hidden bg-white font-['Open_Sans','Noto_Sans',sans-serif]">
      <div className="flex h-[738px]">
        <Sidebar />
        <main className="flex w-[1127px] flex-col">
          <TabBar />
          <Dashboard />
        </main>
      </div>
      <Taskbar />
      <CloseBatchDialog />
      <svg viewBox="0 0 18 24" className="absolute top-[650px] left-[983px] h-6 w-[18px]">
        <path
          d="M4.500 2.200c0-1.700 2.800-1.700 2.800 0V9l.5-.3c1-.6 2.200-.2 2.500.7 1-.5 2.300-.1 2.600.9 1.200-.4 2.600.2 2.600 1.800v3.500c0 2-1 3.400-1.700 4.600l-.2 2.300H6.300c-.3-2.200-2.300-3.700-3.300-5.700L1 13.500c-.5-1.300 1-2.300 2-1.300l1.500 1.500z"
          fill="#fff"
          stroke="#101010"
          strokeWidth="1.100"
        />
        <path d="M7.500 9v4M10.200 9.500v3.500M12.800 10.500v3" stroke="#101010" strokeWidth="0.900" />
      </svg>
    </div>
  );
}
